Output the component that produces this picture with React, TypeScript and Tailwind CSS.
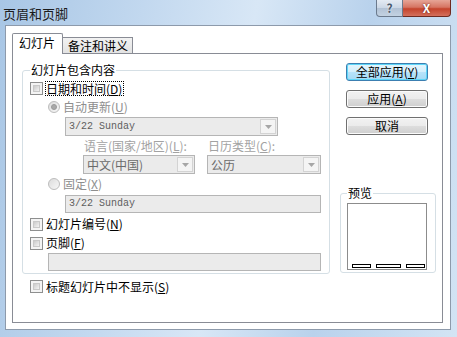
import React from "react";

function Check() {
  return (
    <span className="box-border w-[13px] h-[13px] border border-[#8e8f8f] bg-[#f4f4f4] p-[2px] flex shrink-0">
      <span className="flex-1 border border-[#c9c9c9] bg-[linear-gradient(135deg,#cbcbcb,#f3f3f3)]" />
    </span>
  );
}

function Radio({ on }: { on?: boolean }) {
  return (
    <span className="box-border w-[12px] h-[12px] rounded-full border border-[#bcbcbc] bg-[linear-gradient(135deg,#dcdcdc,#f7f7f7)] flex items-center justify-center shrink-0">
      {on ? <span className="w-[6px] h-[6px] rounded-full bg-[#a9a9a9] border border-[#9a9a9a]" /> : null}
    </span>
  );
}

function Arrow() {
  return (
    <span className="m-[1px] w-[16px] border border-[#d3d3d3] bg-[#f4f4f4] flex items-center justify-center shrink-0">
      <svg width="7" height="4" viewBox="0 0 7 4">
        <path d="M0 0 L7 0 L3.5 4 Z" fill="#a6a6a6" />
      </svg>
    </span>
  );
}

function Combo({ className, text, mono }: { className: string; text: string; mono?: boolean }) {
  return (
    <div className={"box-border h-[19px] border border-[#b5b5b5] bg-[#ebebeb] flex items-stretch " + className}>
      <span
        className={
          "flex-1 flex items-center pl-[3px] " +
          (mono ? "font-['Liberation_Mono',monospace] text-[10px] text-[#5e5e5e]" : "text-[12px] text-[#6a6a6a]")
        }
      >
        {text}
      </span>
      <Arrow />
    </div>
  );
}

function Btn({ children, focus }: { children: React.ReactNode; focus?: boolean }) {
  return (
    <div
      className={
        "box-border ml-[6px] w-[82px] h-[18px] rounded-[3px] border flex items-center justify-center text-[12px] leading-[14px] " +
        (focus
          ? "border-[#3c7fb1] bg-[linear-gradient(#e6f6fd_0%,#d3effc_50%,#b7e3fa_51%,#a5daf5_100%)] shadow-[inset_0_0_0_1px_#5ed6f8]"
          : "border-[#707070] bg-[linear-gradient(#f2f2f2_0%,#ebebeb_50%,#dddddd_51%,#cfcfcf_100%)] shadow-[inset_0_0_0_1px_#fbfbfb]")
      }
    >
      {children}
    </div>
  );
}

export default function App() {
  return (
    <div className="w-[457px] h-[337px] overflow-hidden flex flex-col bg-[linear-gradient(100deg,#a8c6e5_0%,#c2d8ef_28%,#d8e7f6_50%,#b9d2ec_72%,#d3e4f4_100%)] font-['Noto_Sans_CJK_SC',sans-serif] text-[12px] leading-[16px] text-black">
      {/* title bar */}
      <div className="h-[25px] flex items-start shrink-0">
        <div className="pl-[3px] pt-[6px] text-[13px] leading-[16px] text-[#1b1b1b]">页眉和页脚</div>
        <div className="ml-auto mr-[6px] flex">
          <div className="box-border w-[27px] h-[17px] rounded-bl-[4px] border border-[#6b7a8d] border-t-0 bg-[linear-gradient(#e4ebf3_0%,#cbd7e5_50%,#b2c2d5_51%,#c3d2e2_100%)] flex items-center justify-center text-[12px] font-bold text-[#4a5a6e] [text-shadow:0_0_2px_#ffffff]">
            ?
          </div>
          <div className="box-border w-[48px] h-[17px] rounded-br-[4px] border border-l-0 border-t-0 border-[#6e2a20] bg-[linear-gradient(#e6a597_0%,#d67563_45%,#c4432c_55%,#d4705c_100%)] flex items-center justify-center text-[12px] font-bold text-white [text-shadow:0_0_2px_#5a1a10]">
            X
          </div>
        </div>
      </div>

      {/* client area */}
      <div className="box-border ml-[5px] mr-[6px] h-[305px] border border-[#8d9aab] bg-white pl-[6px] pt-[7px] flex flex-col">
        {/* tabs */}
        <div className="flex items-end h-[20px]">
          <div className="box-border relative z-10 -mb-px h-[21px] w-[51px] border border-b-0 border-[#898c95] rounded-t-[2px] bg-white pl-[6px] pt-[1px]">
            幻灯片
          </div>
          <div className="box-border -ml-px h-[16px] w-[71px] border border-b-0 border-[#898c95] bg-[linear-gradient(#f2f2f2,#e3e3e3)] pl-[5px] leading-[15px]">
            备注和讲义
          </div>
        </div>

        {/* panel */}
        <div className="box-border w-[431px] h-[270px] border border-[#898c95] bg-white flex">
          {/* left column */}
          <div className="ml-[9px] flex flex-col">
            <fieldset className="box-border mt-[8px] w-[308px] border border-[#d5dfe5] rounded-[3px] pl-[7px] pb-[2px] pt-[1px] flex flex-col">
              <legend className="px-[1px] leading-[16px]">幻灯片包含内容</legend>

              <div className="h-[18px] flex items-center">
                <Check />
                <span className="ml-[2px] box-border h-[15px] border border-dotted border-black leading-[13px] pr-[1px]">
                  日期和时间(<u>D</u>)
                </span>
              </div>

              <div className="h-[19px] flex items-center pl-[18px]">
                <Radio on />
                <span className="ml-[3px] text-[#8e8e8e]">自动更新(<u>U</u>)</span>
              </div>

              <Combo className="ml-[35px] mt-[1px] w-[213px]" text="3/22 Sunday" mono />

              <div className="mt-[1px] h-[17px] flex items-center text-[#a2a2a2]">
                <span className="ml-[54px] w-[124px]">语言(国家/地区)(<u>L</u>):</span>
                <span>日历类型(<u>C</u>):</span>
              </div>

              <div className="mt-[1px] flex">
                <Combo className="ml-[53px] w-[112px]" text="中文(中国)" />
                <Combo className="ml-[12px] w-[114px]" text="公历" />
              </div>

              <div className="h-[19px] flex items-center pl-[18px]">
                <Radio />
                <span className="ml-[3px] text-[#8e8e8e]">固定(<u>X</u>)</span>
              </div>

              <div className="box-border ml-[35px] mt-[2px] w-[256px] h-[18px] border border-[#b5b5b5] bg-[#ebebeb] flex items-center pl-[3px] font-['Liberation_Mono',monospace] text-[10px] text-[#5e5e5e]">
                3/22 Sunday
              </div>

              <div className="mt-[2px] h-[18px] flex items-center">
                <Check />
                <span className="ml-[3px]">幻灯片编号(<u>N</u>)</span>
              </div>

              <div className="mt-[1px] h-[18px] flex items-center">
                <Check />
                <span className="ml-[3px]">页脚(<u>F</u>)</span>
              </div>

              <div className="box-border ml-[18px] mt-[1px] w-[273px] h-[18px] border border-[#b5b5b5] bg-[#ebebeb]" />
            </fieldset>

            <div className="ml-[8px] mt-[3px] h-[19px] flex items-center">
              <Check />
              <span className="ml-[3px]">标题幻灯片中不显示(<u>S</u>)</span>
            </div>
          </div>

          {/* right column */}
          <div className="ml-[10px] w-[96px] flex flex-col">
            <div className="mt-[9px]">
              <Btn focus>
                全部应用(<u>Y</u>)
              </Btn>
            </div>
            <div className="mt-[9px]">
              <Btn>
                应用(<u>A</u>)
              </Btn>
            </div>
            <div className="mt-[9px]">
              <Btn>取消</Btn>
            </div>

            <fieldset className="box-border mt-[50px] w-[96px] border border-[#d5dfe5] rounded-[3px] pl-[6px] pb-[2px] flex flex-col">
              <legend className="px-[1px] leading-[16px]">预览</legend>
              <div className="box-border mt-[2px] w-[80px] h-[67px] border border-[#8c8c8c] bg-white flex items-end pl-[4px] pb-[1px] gap-[5px]">
                <span className="box-border w-[19px] h-[4px] border border-black bg-white" />
                <span className="box-border w-[25px] h-[4px] border border-black bg-white" />
                <span className="box-border w-[19px] h-[4px] border border-black bg-white" />
              </div>
            </fieldset>
          </div>
        </div>
      </div>
    </div>
  );
}
